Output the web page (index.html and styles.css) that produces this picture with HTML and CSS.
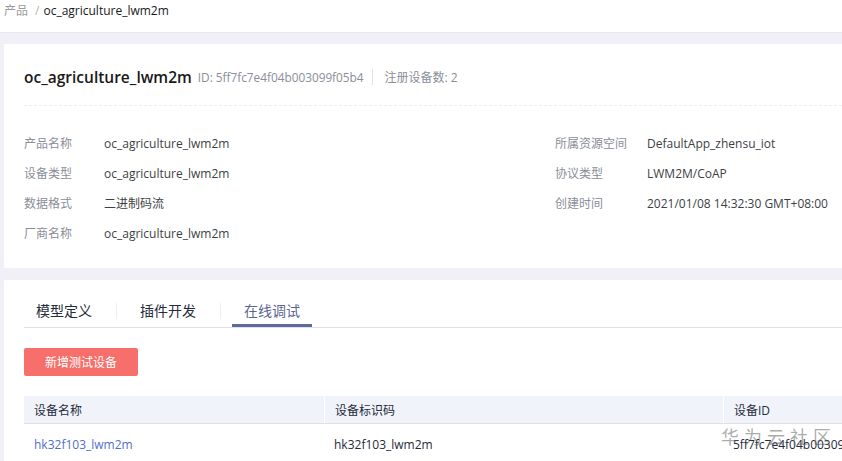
FILE: index.html
```html
<!DOCTYPE html>
<html lang="zh-CN">
<head>
    <meta charset="UTF-8">
    <title>oc_agriculture_lwm2m</title>
    <link rel="stylesheet" href="styles.css">
</head>
<body>
    <!-- Breadcrumb -->
    <div class="crumb">
        <span class="crumb-root">产品</span>
        <span class="crumb-sep">/</span>
        <span class="crumb-cur">oc_agriculture_lwm2m</span>
    </div>

    <div class="page">
        <!-- Product info card -->
        <div class="card info-card">
            <div class="head">
                <h2 class="prod-name">oc_agriculture_lwm2m</h2>
                <span class="prod-id">ID: 5ff7fc7e4f04b003099f05b4</span>
                <span class="head-div"></span>
                <span class="prod-count">注册设备数: 2</span>
            </div>
            <div class="details">
                <div class="col">
                    <div class="row"><span class="lbl">产品名称</span><span class="val">oc_agriculture_lwm2m</span></div>
                    <div class="row"><span class="lbl">设备类型</span><span class="val">oc_agriculture_lwm2m</span></div>
                    <div class="row"><span class="lbl">数据格式</span><span class="val">二进制码流</span></div>
                    <div class="row"><span class="lbl">厂商名称</span><span class="val">oc_agriculture_lwm2m</span></div>
                </div>
                <div class="col col-right">
                    <div class="row"><span class="lbl lbl-wide">所属资源空间</span><span class="val">DefaultApp_zhensu_iot</span></div>
                    <div class="row"><span class="lbl lbl-wide">协议类型</span><span class="val">LWM2M/CoAP</span></div>
                    <div class="row"><span class="lbl lbl-wide">创建时间</span><span class="val">2021/01/08 14:32:30 GMT+08:00</span></div>
                </div>
            </div>
        </div>

        <!-- Tabs card -->
        <div class="card tab-card">
            <div class="tabs">
                <div class="tab">模型定义</div>
                <div class="tab">插件开发</div>
                <div class="tab active">在线调试</div>
            </div>
            <button class="btn-add">新增测试设备</button>
            <div class="table">
                <div class="tr th">
                    <div class="cell c1">设备名称</div>
                    <div class="cell c2">设备标识码</div>
                    <div class="cell c3">设备ID</div>
                </div>
                <div class="tr">
                    <div class="cell c1"><a href="#" class="dev-link">hk32f103_lwm2m</a></div>
                    <div class="cell c2">hk32f103_lwm2m</div>
                    <div class="cell c3 id-cell">5ff7fc7e4f04b003099f05b4_hk32f103_lwm2m</div>
                </div>
            </div>
        </div>
    </div>

    <div class="watermark">华为云社区</div>
</body>
</html>
```

FILE: styles.css
```css
body {
    margin: 0;
    padding: 0;
    font-family: "Open Sans", "Noto Sans CJK SC", sans-serif;
    font-size: 12px;
    color: #252b3a;
    background-color: #f0f0f6;
    overflow: hidden;
}

.crumb {
    height: 32px;
    background-color: #fff;
    padding: 0 0 0 4px;
    display: flex;
    align-items: flex-start;
    line-height: 22px;
    border-bottom: 1px solid #e8e8ee;
}

.crumb-root {
    color: #9a9a9a;
}

.crumb-sep {
    color: #b5b5b5;
    margin: 0 4px 0 7px;
}

.crumb-cur {
    color: #191919;
}

.page {
    padding: 11px 0 0 4px;
}

.card {
    background-color: #fff;
}

.info-card {
    height: 224px;
    padding: 0 0 0 20px;
    margin-bottom: 12px;
}

.head {
    display: flex;
    align-items: center;
    padding-top: 4px;
    box-sizing: border-box;
    height: 62px;
    border-bottom: 1px dashed #eeeef2;
}

.prod-name {
    margin: 0;
    font-size: 15.5px;
    font-weight: 600;
    color: #191919;
}

.prod-id {
    color: #8a8e99;
    margin-left: 6px;
    font-size: 11.8px;
}

.head-div {
    width: 1px;
    height: 16px;
    background-color: #dfe1e6;
    margin: 0 12px 0 8px;
}

.prod-count {
    color: #8a8e99;
}

.details {
    display: flex;
    padding-top: 23px;
}

.col {
    width: 531px;
    flex-shrink: 0;
}

.col-right {
    flex-shrink: 1;
}

.row {
    display: flex;
    height: 30px;
    line-height: 30px;
}

.lbl {
    width: 80px;
    color: #8a8e99;
}

.lbl-wide {
    width: 92px;
}

.val {
    color: #3c3f45;
    white-space: nowrap;
}

.tab-card {
    height: 200px;
    padding: 14px 0 0 20px;
}

.tabs {
    display: flex;
    border-bottom: 1px solid #dfe1e6;
    height: 33px;
}

.tab {
    position: relative;
    padding: 0 12px;
    line-height: 34px;
    font-size: 14px;
    color: #252b3a;
    margin-right: 24px;
    box-sizing: border-box;
    height: 33px;
}

.tab + .tab::before {
    content: "";
    position: absolute;
    left: -12px;
    top: 9px;
    width: 1px;
    height: 16px;
    background-color: #eceef1;
}

.tab.active {
    color: #5a6590;
    border-bottom: 3px solid #5e6a9c;
}

.btn-add {
    display: block;
    margin-top: 20px;
    width: 114px;
    height: 28px;
    border: none;
    border-radius: 2px;
    background-color: #f66f6a;
    color: #fff;
    font-family: inherit;
    font-size: 12px;
}

.table {
    margin-top: 20px;
}

.tr {
    display: flex;
    height: 40px;
    align-items: center;
}

.th {
    height: 27px;
    background-color: #f0f3fa;
    border-bottom: 1px solid #dfe1e6;
    color: #252b3a;
}

.cell {
    padding-left: 10px;
    height: 100%;
    display: flex;
    align-items: center;
    white-space: nowrap;
    box-sizing: border-box;
}

.th .cell + .cell {
    border-left: 1px solid #fff;
}

.c1 {
    width: 300px;
}

.c2 {
    width: 399px;
}

.c3 {
    flex: 1;
    overflow: hidden;
}

.dev-link {
    color: #526ecc;
    text-decoration: none;
}

.id-cell {
    color: #252b3a;
}

.watermark {
    position: absolute;
    left: 721px;
    top: 423px;
    font-size: 18px;
    letter-spacing: 5px;
    color: rgba(90, 90, 90, 0.5);
    font-family: "Noto Sans CJK SC", sans-serif;
}
```
